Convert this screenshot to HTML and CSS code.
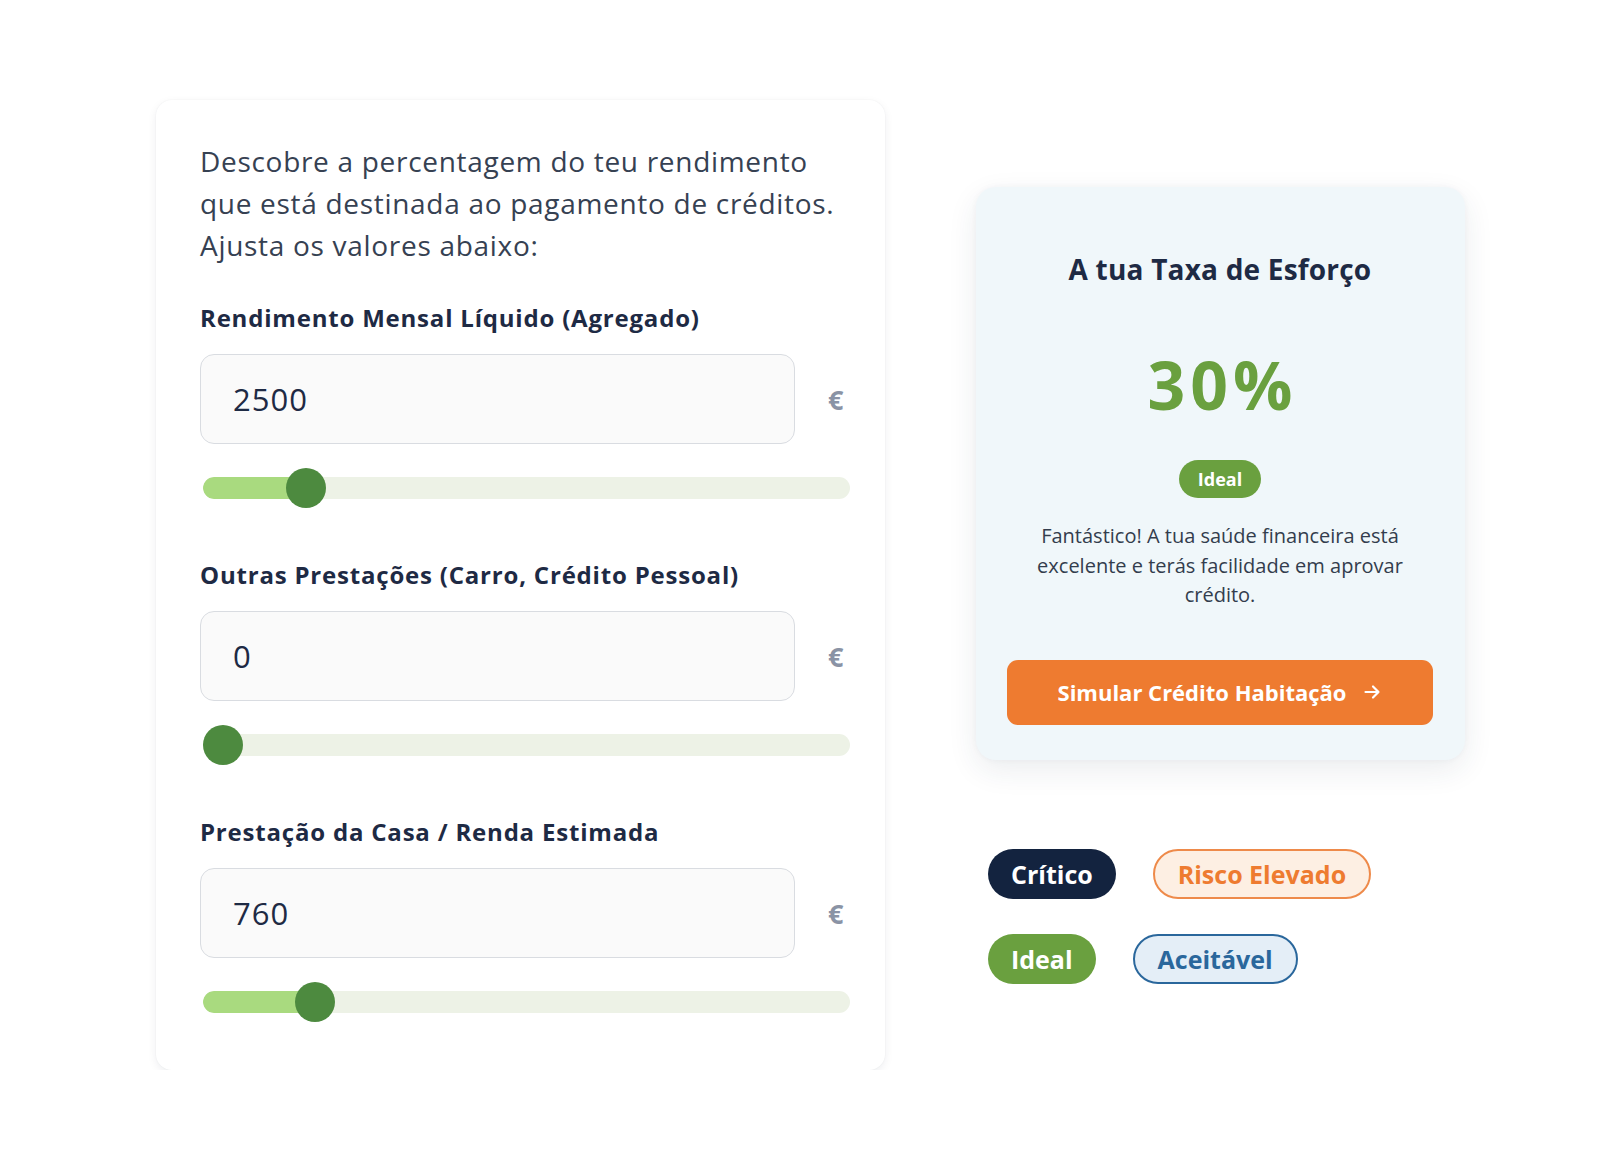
FILE: index.html
```html
<!DOCTYPE html>
<html lang="pt">
<head>
<meta charset="utf-8">
<title>Taxa de Esforço</title>
<link rel="stylesheet" href="styles.css">
</head>
<body>
<main class="page">
  <section class="calc-card">
    <p class="intro">Descobre a percentagem do teu rendimento<br>que está destinada ao pagamento de créditos.<br>Ajusta os valores abaixo:</p>

    <div class="field">
      <label class="field-label">Rendimento Mensal Líquido (Agregado)</label>
      <div class="input-row">
        <div class="input-box">2500</div>
        <span class="currency">€</span>
      </div>
      <div class="slider">
        <div class="track">
          <div class="fill" style="width: 103px"></div>
        </div>
        <div class="thumb" style="left: 83px"></div>
      </div>
    </div>

    <div class="field">
      <label class="field-label">Outras Prestações (Carro, Crédito Pessoal)</label>
      <div class="input-row">
        <div class="input-box">0</div>
        <span class="currency">€</span>
      </div>
      <div class="slider">
        <div class="track">
          <div class="fill" style="width: 0px"></div>
        </div>
        <div class="thumb" style="left: 0px"></div>
      </div>
    </div>

    <div class="field">
      <label class="field-label">Prestação da Casa / Renda Estimada</label>
      <div class="input-row">
        <div class="input-box">760</div>
        <span class="currency">€</span>
      </div>
      <div class="slider">
        <div class="track">
          <div class="fill" style="width: 112px"></div>
        </div>
        <div class="thumb" style="left: 92px"></div>
      </div>
    </div>
  </section>

  <aside class="side">
    <section class="result-card">
      <h2 class="result-title">A tua Taxa de Esforço</h2>
      <div class="result-value">30%</div>
      <span class="pill pill-ideal pill-sm">Ideal</span>
      <p class="result-text">Fantástico! A tua saúde financeira está excelente e terás facilidade em aprovar crédito.</p>
      <button class="cta">
        <span>Simular Crédito Habitação</span>
        <svg class="cta-arrow" width="20" height="20" viewBox="0 0 20 20" fill="none" stroke="#ffffff" stroke-width="2.2" stroke-linecap="round" stroke-linejoin="round"><path d="M3.5 10h13M11 4.5 16.5 10 11 15.5"/></svg>
      </button>
    </section>

    <div class="legend">
      <span class="pill pill-critico">Crítico</span>
      <span class="pill pill-risco">Risco Elevado</span>
      <span class="pill pill-ideal">Ideal</span>
      <span class="pill pill-aceitavel">Aceitável</span>
    </div>
  </aside>
</main>
</body>
</html>
```

FILE: styles.css
```css
* { box-sizing: border-box; }

html, body {
  margin: 0;
  padding: 0;
  background: #ffffff;
}

body {
  font-family: "Open Sans", "Noto Sans", sans-serif;
  color: #1e2a44;
}

.page {
  display: flex;
  align-items: flex-start;
  gap: 91px;
  padding: 100px 0 0 156px;
}

/* Left calculator card */
.calc-card {
  width: 729px;
  background: #ffffff;
  border-radius: 16px;
  box-shadow: 0 3px 10px rgba(20, 30, 50, 0.07), 0 0 2px rgba(20, 30, 50, 0.05);
  padding: 40px 36px 48px 44px;
}

.intro {
  margin: 0 0 37px 0;
  font-size: 28px;
  line-height: 42px;
  color: #364152;
  font-weight: 400;
  letter-spacing: 0.7px;
  white-space: nowrap;
}

.field {
  display: flex;
  flex-direction: column;
}

.field + .field {
  margin-top: 52px;
}

.field-label {
  display: block;
  font-size: 24px;
  line-height: 30px;
  font-weight: 700;
  color: #1e2a44;
  margin-bottom: 21px;
  letter-spacing: 0.8px;
}

.input-row {
  display: flex;
  align-items: center;
}

.input-box {
  width: 595px;
  height: 90px;
  border: 1.5px solid #d9dce1;
  border-radius: 14px;
  background: #fafafa;
  padding-left: 32px;
  display: flex;
  align-items: center;
  font-size: 31px;
  letter-spacing: 1px;
  color: #1e2a44;
}

.currency {
  margin-left: 33px;
  font-size: 27px;
  color: #8a93a5;
  font-weight: 700;
}

.slider {
  position: relative;
  height: 40px;
  margin-top: 24px;
  width: 647px;
  margin-left: 3px;
}

.track {
  position: absolute;
  left: 0;
  right: 0;
  top: 9px;
  height: 22px;
  border-radius: 11px;
  background: #edf2e6;
  overflow: hidden;
}

.fill {
  height: 100%;
  background: #a9da7f;
  border-radius: 11px 0 0 11px;
}

.thumb {
  position: absolute;
  top: 0;
  width: 40px;
  height: 40px;
  border-radius: 50%;
  background: #4d8a3f;
}

/* Right column */
.side {
  margin-top: 87px;
  width: 489px;
}

.result-card {
  background: #f0f7fa;
  border-radius: 20px;
  box-shadow: 0 10px 30px rgba(30, 50, 80, 0.09), 0 0 6px rgba(30, 50, 80, 0.04);
  padding: 64px 32px 35px 31px;
  display: flex;
  flex-direction: column;
  align-items: center;
  text-align: center;
}

.result-title {
  margin: 0;
  font-size: 28px;
  line-height: 36px;
  font-weight: 700;
  color: #1e2a44;
  letter-spacing: 0.2px;
}

.result-value {
  margin-top: 61px;
  font-size: 66px;
  line-height: 72px;
  font-weight: 700;
  color: #6aa03f;
  letter-spacing: 5px;
  padding-left: 5px;
}

.pill {
  display: inline-flex;
  align-items: center;
  justify-content: center;
  height: 50px;
  padding: 0 23px;
  border-radius: 25px;
  font-size: 25px;
  font-weight: 700;
  white-space: nowrap;
}

.pill-sm {
  height: 38px;
  padding: 0 19px;
  border-radius: 19px;
  font-size: 18px;
  margin-top: 40px;
}

.pill-ideal {
  background: #6aa03f;
  color: #ffffff;
}

.pill-critico {
  background: #13233f;
  color: #ffffff;
}

.pill-risco {
  background: #fdefe3;
  color: #ee7b30;
  border: 2px solid #ee8a4a;
}

.pill-aceitavel {
  background: #e4eef7;
  color: #2a679c;
  border: 2px solid #2a679c;
}

.result-text {
  margin: 23px 0 0 0;
  width: 390px;
  font-size: 20px;
  line-height: 29.5px;
  color: #333d4d;
}

.cta {
  margin-top: 50px;
  width: 426px;
  height: 65px;
  border: none;
  border-radius: 11px;
  background: #ee7b30;
  color: #ffffff;
  font-family: inherit;
  font-size: 22px;
  font-weight: 700;
  display: flex;
  align-items: center;
  justify-content: center;
  gap: 16px;
  cursor: pointer;
}

.cta-arrow {
  display: block;
}

.legend {
  display: flex;
  flex-wrap: wrap;
  gap: 35px 37px;
  margin-top: 89px;
  padding-left: 12px;
  width: 420px;
}
```
